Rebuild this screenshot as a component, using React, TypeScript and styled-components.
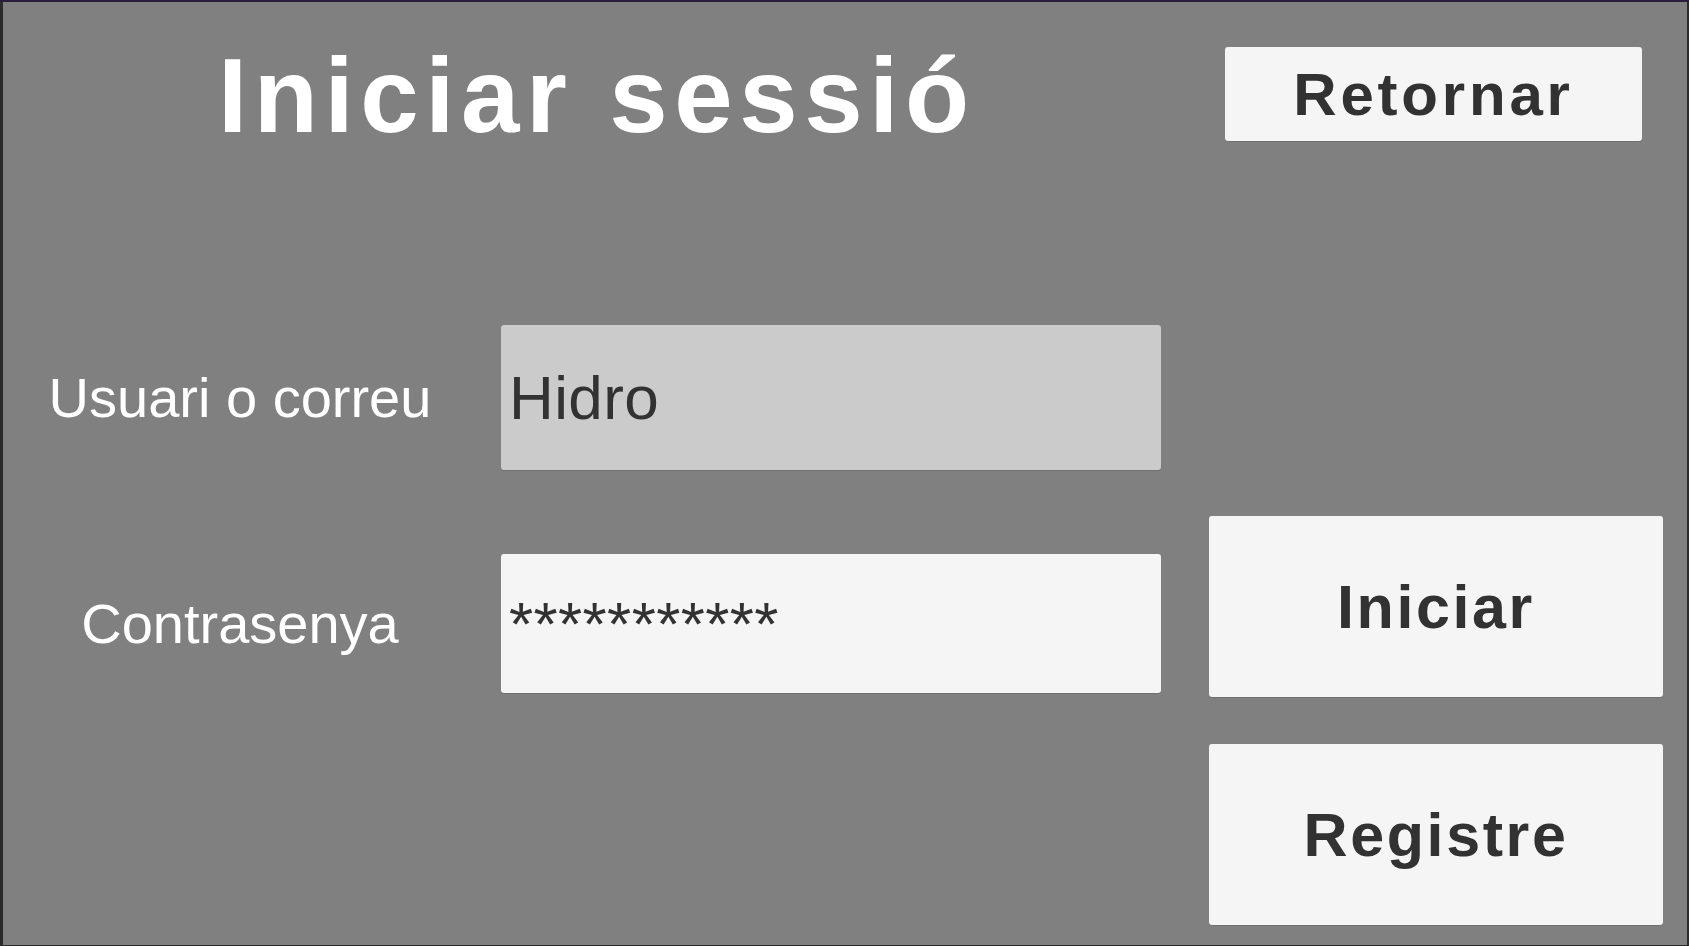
import styled, { createGlobalStyle } from 'styled-components';
import { FC } from 'react';

const GlobalStyle = createGlobalStyle`
    html, body {
        margin: 0;
        padding: 0;
        overflow: hidden;
        background: #2b2b2b;
    }
    * {
        box-sizing: border-box;
    }
`;

const App: FC = () => (
    <Frame>
        <GlobalStyle />
        <Panel>
            <Header>
                <Title>Iniciar sessió</Title>
                <Button size='small'>Retornar</Button>
            </Header>
            <Body>
                <Form>
                    <Label>Usuari o correu</Label>
                    <Field readOnly value='Hidro' tone='active' height={145} />
                    <Label>Contrasenya</Label>
                    <Field readOnly value='***********' tone='idle' height={139} />
                </Form>
                <Actions>
                    <Button size='large'>Iniciar</Button>
                    <Button size='large'>Registre</Button>
                </Actions>
            </Body>
        </Panel>
    </Frame>
);

const Frame = styled.div({
    width: '1689px',
    height: '946px',
    display: 'flex',
    background: '#2b2b2b',
    borderTop: '2px solid #2a1c3c',
    padding: '0 2px 1px 3px',
});

const Panel = styled.div({
    flex: 1,
    display: 'flex',
    flexDirection: 'column',
    background: '#808080',
    fontFamily: '"Liberation Sans", Arial, sans-serif',
});

const Header = styled.div({
    display: 'flex',
    justifyContent: 'space-between',
    alignItems: 'flex-start',
    paddingRight: '45px',
});

const Title = styled.h1({
    margin: '41px 0 0 215px',
    fontSize: '105px',
    lineHeight: 1,
    fontWeight: 700,
    letterSpacing: '6.6px',
    color: '#ffffff',
});

const Button = styled.button<{ size: 'small' | 'large' }>(({ size }) => ({
    display: 'flex',
    alignItems: 'center',
    justifyContent: 'center',
    width: size === 'small' ? '417px' : '454px',
    height: size === 'small' ? '94px' : '181px',
    marginTop: size === 'small' ? '45px' : 0,
    padding: 0,
    border: 'none',
    borderRadius: '3px',
    background: '#f5f5f5',
    boxShadow: '0 1px 0 rgba(0, 0, 0, 0.12)',
    color: '#323232',
    fontFamily: '"Liberation Sans", Arial, sans-serif',
    fontSize: size === 'small' ? '60px' : '61px',
    fontWeight: 700,
    letterSpacing: size === 'small' ? '3.8px' : '2.6px',
    cursor: 'pointer',
}));

const Body = styled.div({
    display: 'flex',
    alignItems: 'flex-start',
    gap: '48px',
});

const Form = styled.div({
    marginTop: '177px',
    display: 'grid',
    gridTemplateColumns: '474px 660px',
    columnGap: '24px',
    rowGap: '84px',
    alignItems: 'center',
});

const Label = styled.span({
    textAlign: 'center',
    fontSize: '56px',
    color: '#ffffff',
});

const Field = styled.input<{ tone: 'active' | 'idle'; height: number }>(({ tone, height }) => ({
    width: '660px',
    height: `${height}px`,
    padding: '0 0 0 8px',
    border: 'none',
    borderRadius: '3px',
    outline: 'none',
    background: tone === 'active' ? '#cbcbcb' : '#f5f5f5',
    boxShadow: '0 1px 0 rgba(0, 0, 0, 0.12)',
    color: '#323232',
    fontFamily: '"Liberation Sans", Arial, sans-serif',
    fontSize: '62px',
    letterSpacing: '0.4px',
}));

const Actions = styled.div({
    marginTop: '368px',
    display: 'flex',
    flexDirection: 'column',
    gap: '47px',
});

export default App;
